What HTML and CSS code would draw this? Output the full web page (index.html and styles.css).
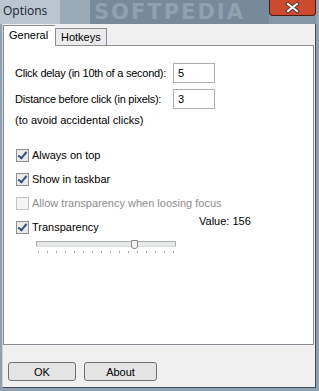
FILE: index.html
```html
<!DOCTYPE html>
<html lang="en">
<head>
    <meta charset="UTF-8">
    <title>Options</title>
    <link rel="stylesheet" href="styles.css">
</head>
<body>

<div class="window">
    <div class="titlebar">
        <div class="title">Options</div>
        <div class="fade"></div>
        <div class="glass">SOFTPEDIA</div>
        <div class="close">
            <svg width="45" height="15" viewBox="0 0 45 15">
                <path d="M18 4 L27 11 M27 4 L18 11" stroke="#4a3434" stroke-width="4" stroke-linecap="square"/>
                <path d="M18 4 L27 11 M27 4 L18 11" stroke="#ffffff" stroke-width="2" stroke-linecap="square"/>
            </svg>
        </div>
        <div class="edge"></div>
    </div>

    <div class="client">
        <div class="tabs">
            <div class="tab active">General</div>
            <div class="tab">Hotkeys</div>
        </div>

        <div class="panel">
            <div class="field">
                <span class="label">Click delay (in 10th of a second):</span>
                <div class="input">5</div>
            </div>
            <div class="field">
                <span class="label">Distance before click (in pixels):</span>
                <div class="input">3</div>
            </div>
            <div class="note">(to avoid accidental clicks)</div>

            <div class="checks">
                <div class="check"><span class="box checked"></span>Always on top</div>
                <div class="check"><span class="box checked"></span>Show in taskbar</div>
                <div class="check disabled"><span class="box"></span>Allow transparency when loosing focus</div>
                <div class="check transparency">
                    <span class="box checked"></span>Transparency
                    <span class="value">Value: 156</span>
                </div>
            </div>

            <div class="slider">
                <div class="track">
                    <div class="thumb"></div>
                </div>
                <div class="ticks" id="ticks"></div>
            </div>
        </div>

        <div class="buttons">
            <button class="btn">OK</button>
            <button class="btn about">About</button>
        </div>
    </div>
</div>

<script>
    const ticks = document.getElementById('ticks');
    for (let i = 0; i < 16; i++) {
        const t = document.createElement('span');
        ticks.appendChild(t);
    }
</script>

</body>
</html>
```

FILE: styles.css
```css
body {
    margin: 0;
    padding: 0;
    font-family: "Liberation Sans", Arial, sans-serif;
    font-size: 11px;
    color: #000;
}

.window {
    width: 319px;
    height: 391px;
    display: flex;
    flex-direction: column;
    background-color: #8fa1ae;
    overflow: hidden;
}

.titlebar {
    height: 24px;
    display: flex;
    align-items: flex-start;
    background: #8596a5;
}

.title {
    width: 60px;
    height: 24px;
    font-family: "Open Sans", sans-serif;
    font-size: 12px;
    color: #1a2330;
    padding: 2px 0 0 3px;
    line-height: 18px;
    background: #b9c5cf;
    box-sizing: border-box;
}

.fade {
    width: 30px;
    height: 24px;
    background: #9aaab7;
}

.glass {
    flex: 1;
    height: 24px;
    padding-left: 4px;
    font-family: "DejaVu Sans", sans-serif;
    font-size: 21px;
    font-weight: bold;
    letter-spacing: 2px;
    line-height: 24px;
    color: #91a1af;
    background: #778a9b;
    overflow: hidden;
    white-space: nowrap;
}

.close {
    width: 47px;
    height: 16px;
    box-sizing: border-box;
    border: 1px solid #4d1a12;
    border-top: none;
    border-radius: 0 0 4px 4px;
    background: #cc4a2e;
    overflow: hidden;
}

.close svg {
    display: block;
}

.edge {
    width: 3px;
    height: 24px;
    background: #95a6b3;
}

.client {
    flex: 1;
    margin: 0 3px 3px 2px;
    background: #f0f0f0;
    border-right: 1px solid #3e4a55;
    border-bottom: 1px solid #3e4a55;
    border-left: 1px solid #c9d3db;
    display: flex;
    flex-direction: column;
    padding: 1px 0 0 0;
}

.tabs {
    display: flex;
    align-items: flex-end;
    height: 20px;
    position: relative;
    z-index: 1;
}

.tab {
    height: 16px;
    padding: 0 5px;
    line-height: 16px;
    border: 1px solid #898c95;
    border-bottom: none;
    background: #ebebeb;
}

.tab.active {
    height: 19px;
    width: 41px;
    padding: 0 5px 1px 5px;
    line-height: 18px;
    background: #fff;
    margin-bottom: -1px;
    border-right: none;
}

.panel {
    height: 300px;
    margin-right: 1px;
    background: #fff;
    border: 1px solid #898c95;
    padding: 17px 0 0 11px;
    box-sizing: border-box;
}

.field {
    display: flex;
    align-items: center;
    height: 19px;
    margin-bottom: 7px;
}

.label {
    width: 158px;
    white-space: nowrap;
    letter-spacing: -0.25px;
}

.input {
    width: 42px;
    height: 20px;
    border: 1px solid #abadb3;
    box-sizing: border-box;
    padding-left: 4px;
    line-height: 18px;
}

.note {
    margin-top: -3px;
    line-height: 16px;
}

.checks {
    margin-top: 15px;
}

.check {
    display: flex;
    align-items: center;
    height: 24px;
    white-space: nowrap;
}

.box {
    width: 13px;
    height: 13px;
    box-sizing: border-box;
    border: 1px solid #8f8f8f;
    background: #e9e9e9;
    margin: 0 3px 0 1px;
    position: relative;
}

.box.checked::after {
    content: "";
    position: absolute;
    left: 3px;
    top: 0px;
    width: 3px;
    height: 7px;
    border: solid #3a4f8c;
    border-width: 0 2px 2px 0;
    transform: rotate(40deg);
}

.check.disabled {
    color: #8d8d8d;
}

.check.disabled .box {
    border-color: #c4c4c4;
    background: #f4f4f4;
}

.transparency {
    position: relative;
}

.value {
    position: absolute;
    left: 184px;
    top: -1px;
    line-height: 14px;
}

.slider {
    margin: 2px 0 0 21px;
    width: 140px;
}

.track {
    height: 4px;
    border: 1px solid #b0b0b0;
    border-bottom-color: #dcdcdc;
    background: #e6e9e9;
    position: relative;
}

.thumb {
    position: absolute;
    left: 94px;
    top: -2px;
    width: 5px;
    height: 7px;
    background: #f2f2f2;
    border: 1px solid #8a8a8a;
    border-radius: 0 0 3px 3px;
}

.ticks {
    display: flex;
    justify-content: space-between;
    padding: 0 2px;
    margin-top: 4px;
}

.ticks span {
    width: 1px;
    height: 2px;
    background: #a0a0a0;
}

.buttons {
    display: flex;
    gap: 8px;
    padding: 17px 0 0 5px;
}

.btn {
    width: 68px;
    height: 19px;
    padding: 0;
    font-family: "Liberation Sans", Arial, sans-serif;
    font-size: 11px;
    color: #000;
    border: 1px solid #707070;
    border-radius: 3px;
    background: #e4e4e4;
}

.btn.about {
    width: 73px;
}
```
